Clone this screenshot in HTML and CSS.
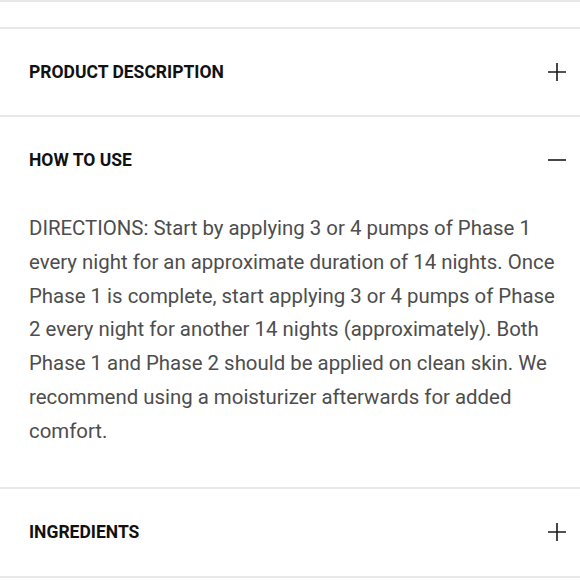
FILE: index.html
```html
<!DOCTYPE html>
<html>
<head>
<meta charset="utf-8">
<link rel="stylesheet" href="styles.css">
</head>
<body>
<div class="accordion">
  <div class="spacer"></div>
  <section class="item">
    <div class="head">
      <h3 class="title">PRODUCT DESCRIPTION</h3>
      <svg class="icon" viewBox="0 0 18 18"><path d="M9 0v18M0 9h18"/></svg>
    </div>
  </section>
  <section class="item open">
    <div class="head">
      <h3 class="title">HOW TO USE</h3>
      <svg class="icon" viewBox="0 0 18 18"><path d="M0 9h18"/></svg>
    </div>
    <div class="body">
      <p>DIRECTIONS: Start by applying 3 or 4 pumps of Phase 1 every night for an approximate duration of 14 nights. Once Phase 1 is complete, start applying 3 or 4 pumps of Phase 2 every night for another 14 nights (approximately). Both Phase 1 and Phase 2 should be applied on clean skin. We recommend using a moisturizer afterwards for added comfort.</p>
    </div>
  </section>
  <section class="item">
    <div class="head last">
      <h3 class="title">INGREDIENTS</h3>
      <svg class="icon" viewBox="0 0 18 18"><path d="M9 0v18M0 9h18"/></svg>
    </div>
  </section>
</div>
</body>
</html>
```
FILE: styles.css
```css
html, body {
  margin: 0;
  padding: 0;
  background: #fff;
}
body {
  font-family: Roboto, "Liberation Sans", sans-serif;
}
.accordion {
  display: flex;
  flex-direction: column;
}
.spacer {
  height: 25px;
  border-top: 2px solid #e8e8e8;
}
.item {
  border-top: 2px solid #e8e8e8;
}
.item:last-child {
  border-bottom: 2px solid #e8e8e8;
}
.head {
  height: 86px;
  display: flex;
  align-items: center;
  justify-content: space-between;
  padding: 0 14px 0 29px;
}
.head.last {
  height: 87px;
}
.title {
  margin: 0;
  font-size: 17.5px;
  font-weight: 700;
  color: #111;
}
.icon {
  width: 18px;
  height: 18px;
  fill: none;
  stroke: #1a1a1a;
  stroke-width: 1.6;
}
.body {
  padding: 9px 24px 38px 29px;
}
.body p {
  margin: 0;
  font-size: 20.4px;
  line-height: 33.8px;
  color: #4d4d4d;
}
```
